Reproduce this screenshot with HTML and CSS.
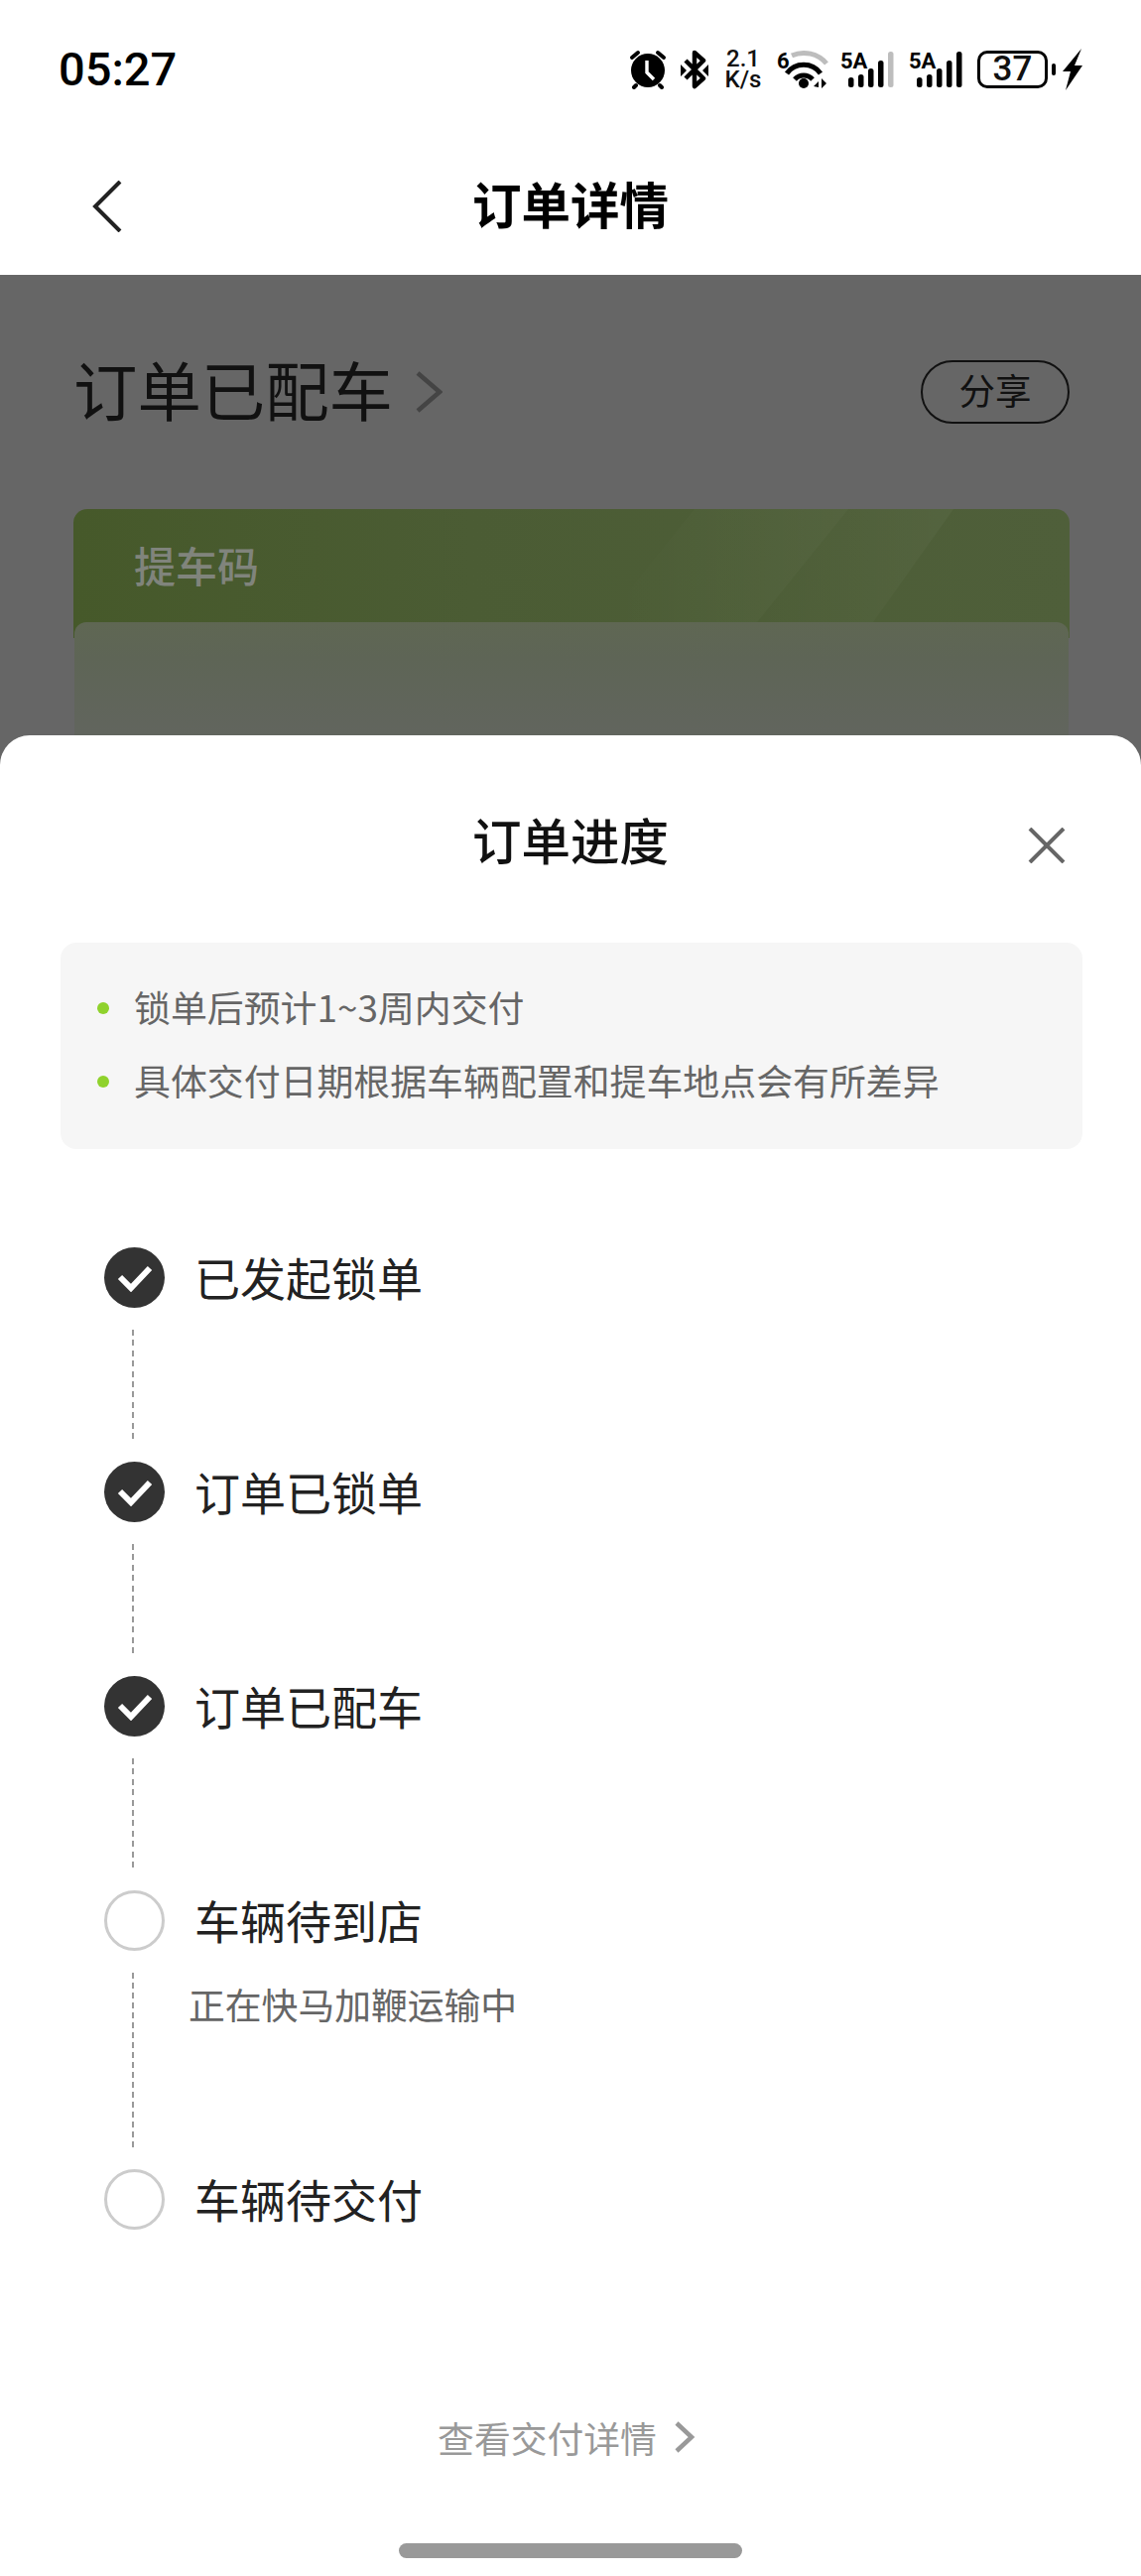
FILE: index.html
```html
<!DOCTYPE html>
<html lang="zh-CN">
<head>
    <meta charset="UTF-8">
    <meta name="viewport" content="width=device-width, initial-scale=1.0">
    <title>订单详情</title>
    <link rel="stylesheet" href="styles.css">
</head>
<body>
    <div class="status-bar">
        <div class="status-time">05:27</div>
        <div class="status-icons">
            <svg class="icon-alarm" width="42" height="40" viewBox="0 0 42 40">
                <circle cx="21" cy="21" r="17" fill="#000"/>
                <path d="M5 8 L11 3 M37 8 L31 3" stroke="#000" stroke-width="4" stroke-linecap="round" fill="none"/>
                <path d="M9 36 L7 38 M33 36 L35 38" stroke="#000" stroke-width="4" stroke-linecap="round" fill="none"/>
                <path d="M20 11 L20 23 L27 30" stroke="#fff" stroke-width="3.4" fill="none"/>
            </svg>
            <svg class="icon-bluetooth" width="28" height="40" viewBox="0 0 28 40">
                <path d="M5 11 L23 29 L14 37 L14 3 L23 11 L5 29" stroke="#000" stroke-width="4.5" stroke-linejoin="round" fill="none"/>
                <path d="M0 15 L6 21 L0 27 Z M28 15 L22 21 L28 27 Z" fill="#000"/>
            </svg>
            <div class="net-speed"><span>2.1</span><span>K/s</span></div>
            <svg class="icon-wifi" width="54" height="42" viewBox="0 0 54 42">
                <text x="0" y="20" class="svg-label">6</text>
                <path d="M15 7 A30 30 0 0 1 50 15" stroke="#bdbdbd" stroke-width="5" fill="none"/>
                <path d="M10 25 A21 21 0 0 1 44 25" stroke="#000" stroke-width="5" fill="none"/>
                <path d="M18 31 A12 12 0 0 1 36 31" stroke="#000" stroke-width="5" fill="none"/>
                <circle cx="27" cy="35" r="5" fill="#000"/>
                <path d="M37 38 L42 33 L42 39 Z M45 30 L45 40 L50 35 Z" fill="#000"/>
            </svg>
            <svg class="icon-signal" width="54" height="40" viewBox="0 0 54 40">
                <text x="0" y="19" class="svg-label">5A</text>
                <rect x="8" y="28" width="5.5" height="10" rx="2.5" fill="#000"/>
                <rect x="18" y="25" width="5.5" height="13" rx="2.5" fill="#000"/>
                <rect x="28" y="19" width="5.5" height="19" rx="2.5" fill="#000"/>
                <rect x="38" y="11" width="5.5" height="27" rx="2.5" fill="#000"/>
                <rect x="48" y="2" width="5.5" height="36" rx="2.5" fill="#bdbdbd"/>
            </svg>
            <svg class="icon-signal" width="54" height="40" viewBox="0 0 54 40">
                <text x="0" y="19" class="svg-label">5A</text>
                <rect x="8" y="28" width="5.5" height="10" rx="2.5" fill="#000"/>
                <rect x="18" y="25" width="5.5" height="13" rx="2.5" fill="#000"/>
                <rect x="28" y="19" width="5.5" height="19" rx="2.5" fill="#000"/>
                <rect x="38" y="11" width="5.5" height="27" rx="2.5" fill="#000"/>
                <rect x="48" y="2" width="5.5" height="36" rx="2.5" fill="#000"/>
            </svg>
            <div class="battery">37</div>
            <div class="battery-nub"></div>
            <svg class="icon-bolt" width="22" height="42" viewBox="0 0 22 42">
                <path d="M20 0 L1 23 L9 23 L4 42 L21 17 L13 17 Z" fill="#000"/>
            </svg>
        </div>
    </div>

    <div class="nav">
        <svg class="back-icon" width="30" height="52" viewBox="0 0 30 52">
            <path d="M28 1 L3 26 L28 51" stroke="#222" stroke-width="4" fill="none"/>
        </svg>
        <div class="nav-title">订单详情</div>
    </div>

    <div class="backdrop">
        <div class="order-head">
            <div class="order-status">
                <span>订单已配车</span>
                <svg width="28" height="42" viewBox="0 0 28 42">
                    <path d="M3 2 L25 21 L3 40" stroke="#444" stroke-width="4.5" fill="none"/>
                </svg>
            </div>
            <div class="share-button">分享</div>
        </div>
        <div class="pickup-card">
            <div class="pickup-label">提车码</div>
            <div class="pickup-glint first"></div>
            <div class="pickup-glint second"></div>
            <div class="pickup-body"></div>
        </div>
    </div>

    <div class="sheet">
        <div class="sheet-head">
            <div class="sheet-title">订单进度</div>
            <svg class="close-icon" width="38" height="36" viewBox="0 0 38 36">
                <path d="M2 1 L36 35 M36 1 L2 35" stroke="#666" stroke-width="4" fill="none"/>
            </svg>
        </div>

        <ul class="notes">
            <li>锁单后预计1~3周内交付</li>
            <li>具体交付日期根据车辆配置和提车地点会有所差异</li>
        </ul>

        <div class="steps">
            <div class="step">
                <div class="step-marker">
                    <div class="step-dot done">
                        <svg width="36" height="28" viewBox="0 0 36 28">
                            <path d="M3 13 L14 24 L33 4" stroke="#fff" stroke-width="6" fill="none"/>
                        </svg>
                    </div>
                    <div class="step-line"></div>
                </div>
                <div class="step-text">
                    <div class="step-label">已发起锁单</div>
                </div>
            </div>
            <div class="step">
                <div class="step-marker">
                    <div class="step-dot done">
                        <svg width="36" height="28" viewBox="0 0 36 28">
                            <path d="M3 13 L14 24 L33 4" stroke="#fff" stroke-width="6" fill="none"/>
                        </svg>
                    </div>
                    <div class="step-line"></div>
                </div>
                <div class="step-text">
                    <div class="step-label">订单已锁单</div>
                </div>
            </div>
            <div class="step">
                <div class="step-marker">
                    <div class="step-dot done">
                        <svg width="36" height="28" viewBox="0 0 36 28">
                            <path d="M3 13 L14 24 L33 4" stroke="#fff" stroke-width="6" fill="none"/>
                        </svg>
                    </div>
                    <div class="step-line"></div>
                </div>
                <div class="step-text">
                    <div class="step-label">订单已配车</div>
                </div>
            </div>
            <div class="step">
                <div class="step-marker">
                    <div class="step-dot"></div>
                    <div class="step-line long"></div>
                </div>
                <div class="step-text">
                    <div class="step-label">车辆待到店</div>
                    <div class="step-sub">正在快马加鞭运输中</div>
                </div>
            </div>
            <div class="step">
                <div class="step-marker">
                    <div class="step-dot"></div>
                </div>
                <div class="step-text">
                    <div class="step-label">车辆待交付</div>
                </div>
            </div>
        </div>

        <div class="details-link">
            <span>查看交付详情</span>
            <svg width="22" height="32" viewBox="0 0 22 32">
                <path d="M3 2 L18 16 L3 30" stroke="#999" stroke-width="4.5" fill="none"/>
            </svg>
        </div>

        <div class="home-bar"></div>
    </div>
</body>
</html>
```

FILE: styles.css
```css
* {
    box-sizing: border-box;
}

body {
    margin: 0;
    padding: 0;
    width: 1150px;
    height: 2596px;
    overflow: hidden;
    background: #FFFFFF;
    font-family: "Noto Sans CJK SC", "Liberation Sans", sans-serif;
    color: #111111;
}

/* 状态栏 */
.status-bar {
    height: 100px;
    padding: 40px 58px 0 59px;
    display: flex;
    justify-content: space-between;
    align-items: center;
}

.status-time {
    font-family: Roboto, "Liberation Sans", sans-serif;
    font-size: 47px;
    font-weight: 500;
    color: #000000;
    line-height: 60px;
}

.status-icons {
    display: flex;
    align-items: center;
}

.status-icons svg {
    flex-shrink: 0;
}

.svg-label {
    font-family: Roboto, "Liberation Sans", sans-serif;
    font-size: 22px;
    font-weight: 700;
}

.icon-bluetooth {
    margin-left: 12px;
}

.net-speed {
    margin-left: 15px;
    width: 40px;
    display: flex;
    flex-direction: column;
    align-items: center;
    font-family: Roboto, "Liberation Sans", sans-serif;
    font-size: 24px;
    font-weight: 500;
    line-height: 21px;
}

.icon-wifi {
    margin-left: 14px;
}

.icon-signal {
    margin-left: 10px;
}

.icon-signal + .icon-signal {
    margin-left: 15px;
}

.battery {
    width: 71px;
    height: 38px;
    margin-left: 15px;
    border: 3px solid #000000;
    border-radius: 10px;
    font-family: Roboto, "Liberation Sans", sans-serif;
    font-size: 35px;
    font-weight: 500;
    line-height: 32px;
    text-align: center;
}

.battery-nub {
    width: 4px;
    height: 12px;
    margin-left: 4px;
    background: #000000;
    border-radius: 2px;
}

.icon-bolt {
    margin-left: 6px;
}

/* 标题栏 */
.nav {
    height: 177px;
    padding-top: 33px;
    display: grid;
    grid-template-columns: 1fr auto 1fr;
    align-items: center;
}

.back-icon {
    margin: 5px 0 0 93px;
}

.nav-title {
    font-size: 49.5px;
    font-weight: 700;
    line-height: 60px;
    color: #000000;
}

/* 遮罩下的页面 */
.backdrop {
    height: 504px;
    padding: 86px 72px 0 74px;
    background: #666666;
    overflow: hidden;
}

.order-head {
    height: 64px;
    display: flex;
    justify-content: space-between;
    align-items: center;
}

.order-status {
    display: flex;
    align-items: center;
    gap: 22px;
    font-size: 64.4px;
    line-height: 64px;
    color: #111111;
}

.order-status span {
    margin-bottom: 8px;
}

.share-button {
    width: 150px;
    height: 64px;
    border: 2px solid #111111;
    border-radius: 32px;
    font-size: 36.5px;
    line-height: 56px;
    text-align: center;
    color: #111111;
}

.pickup-card {
    position: relative;
    margin-top: 86px;
    height: 260px;
    border-radius: 14px 14px 0 0;
    background: linear-gradient(90deg, #46592a 0%, #4b5c34 40%, #4f5f3a 100%) top / 100% 130px no-repeat;
    overflow: hidden;
}

.pickup-label {
    padding: 28px 0 0 61px;
    height: 114px;
    font-size: 42px;
    font-weight: 500;
    line-height: 56px;
    color: #80847c;
}

.pickup-glint {
    position: absolute;
    top: 0;
    left: 0;
    width: 100%;
    height: 114px;
}

.pickup-glint.first {
    background: linear-gradient(90deg, rgba(255, 255, 255, 0) 54%, rgba(255, 255, 255, 0.035) 78%);
    clip-path: polygon(626px 0, 781px 0, 689px 114px, 534px 114px);
}

.pickup-glint.second {
    background: linear-gradient(90deg, rgba(255, 255, 255, 0) 68%, rgba(255, 255, 255, 0.03) 88%);
    clip-path: polygon(781px 0, 887px 0, 806px 114px, 689px 114px);
}

.pickup-body {
    position: relative;
    height: 146px;
    margin: 0 1px;
    border-radius: 12px 12px 0 0;
    background: linear-gradient(180deg, #5f6753 0%, #5e6556 25%, #636561 100%);
}

/* 底部弹层 */
.sheet {
    position: relative;
    height: 1855px;
    margin-top: -40px;
    padding-top: 75px;
    background: #FFFFFF;
    border-radius: 30px 30px 0 0;
}

.sheet-head {
    position: relative;
    height: 60px;
    display: flex;
    justify-content: center;
    align-items: center;
}

.sheet-title {
    font-size: 49.5px;
    font-weight: 500;
    line-height: 60px;
    color: #111111;
}

.close-icon {
    position: absolute;
    right: 76px;
    top: 18px;
}

.notes {
    list-style: none;
    margin: 74px 59px 0 61px;
    height: 208px;
    padding: 27px 0 0 37px;
    background: #F6F6F6;
    border-radius: 16px;
    font-size: 36.9px;
    line-height: 74px;
    color: #666666;
}

.notes li {
    display: flex;
    align-items: center;
    gap: 25px;
}

.notes li::before {
    content: "";
    width: 12px;
    height: 12px;
    border-radius: 50%;
    background: #8FD22C;
    flex-shrink: 0;
    margin-top: 3px;
}

.steps {
    margin: 99px 0 0 105px;
}

.step {
    display: flex;
}

.step-marker {
    width: 61px;
    flex-shrink: 0;
}

.step-dot {
    width: 61px;
    height: 61px;
    border-radius: 50%;
    border: 3.5px solid #CCCCCC;
    display: flex;
    justify-content: center;
    align-items: center;
}

.step-dot.done {
    background: #333333;
    border: none;
}

.step-line {
    width: 2.5px;
    height: 110px;
    margin: 22px 0 23px 27.5px;
    background: repeating-linear-gradient(180deg, #999999 0, #999999 6px, transparent 6px, transparent 10.4px);
}

.step-line.long {
    height: 176px;
    margin-bottom: 22px;
    background: repeating-linear-gradient(180deg, #999999 0, #999999 6px, transparent 6px, transparent 10px);
}

.step-text {
    margin: -1px 0 0 30px;
}

.step-label {
    font-size: 46px;
    line-height: 61px;
    color: #222222;
}

.step-sub {
    margin: 29px 0 0 -6px;
    font-size: 36.8px;
    line-height: 50px;
    color: #666666;
}

.details-link {
    margin-top: 184px;
    height: 50px;
    padding-right: 8px;
    display: flex;
    justify-content: center;
    align-items: center;
    gap: 17px;
    font-size: 36.8px;
    line-height: 50px;
    color: #999999;
}

.home-bar {
    width: 346px;
    height: 15px;
    margin: 82px auto 0;
    background: #999999;
    border-radius: 8px;
}
```
